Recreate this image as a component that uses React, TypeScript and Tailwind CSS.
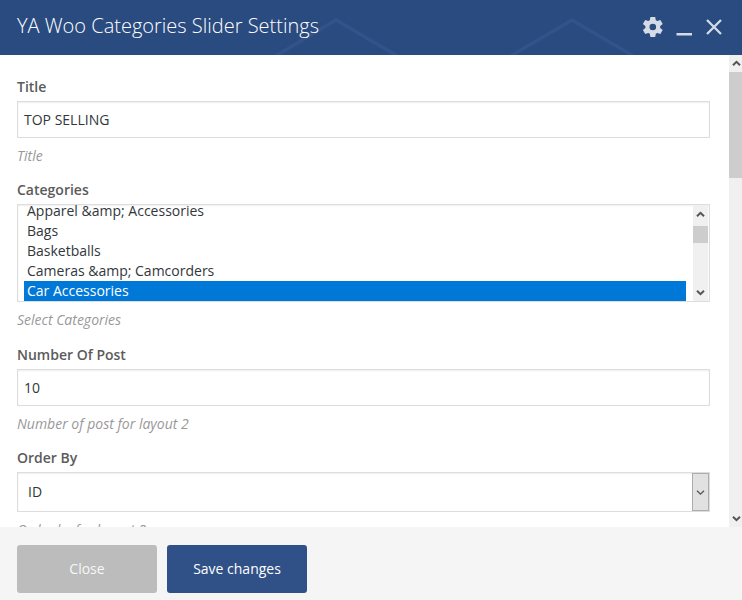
import React from "react";

const categories = [
  "Apparel &amp; Accessories",
  "Bags",
  "Basketballs",
  "Cameras &amp; Camcorders",
  "Car Accessories",
];

const inset = "border border-[#dddddd] bg-white shadow-[inset_0_1px_2px_rgba(0,0,0,0.07)]";

function Chevron({ down = false, thin = false }: { down?: boolean; thin?: boolean }) {
  return (
    <svg width="9" height="7" viewBox="0 0 9 7" fill="none" className={down ? "rotate-180" : ""}>
      <path d="M1 5.3 L4.5 1.8 L8 5.3" stroke="#555555" strokeWidth={thin ? 1.3 : 2} />
    </svg>
  );
}

function Field({
  label,
  hint,
  className = "mb-[14px]",
  children,
}: {
  label: string;
  hint: string;
  className?: string;
  children: React.ReactNode;
}) {
  return (
    <div className={className}>
      <div className="mb-1 h-5 font-semibold text-[#5b5b5b]">{label}</div>
      {children}
      <div className="mt-2 h-5 italic text-[#999999]">{hint}</div>
    </div>
  );
}

function Header() {
  return (
    <header className="relative flex h-[55px] shrink-0 items-center justify-between bg-[#2a4b80] pl-[17px]">
      <svg className="absolute inset-0" width="742" height="55" fill="none">
        <path
          d="M274 57 L336 20 L399 57 M509 57 L572 20 L635 57"
          stroke="#32538a"
          strokeWidth="3.5"
        />
      </svg>
      <h1 className="relative pb-[3px] text-[20px] font-light text-white">
        YA Woo Categories Slider Settings
      </h1>
      <svg className="relative" width="100" height="55" fill="none">
        <g fill="#d4dbe6">
          <path
            fillRule="evenodd"
            d="M8.4 17h4.8l.6 3.2 1.5.9 3.1-1.2 2.3 4-2.5 2.2v1.8l2.5 2.2-2.3 4-3.1-1.2-1.5.9-.6 3.2H8.4l-.6-3.2-1.5-.9-3.1 1.2-2.3-4 2.5-2.2v-1.8L.9 23.900l2.3-4 3.1 1.2 1.500-.9zM10.800 23.700a3.300 3.300 0 1 0 0 6.600 3.300 3.300 0 0 0 0-6.600z"
          />
          <rect x="34.500" y="33" width="15.500" height="2.500" />
        </g>
        <path d="M65 20 L79 34 M79 20 L65 34" stroke="#d4dbe6" strokeWidth="2.300" />
      </svg>
    </header>
  );
}

export default function App() {
  return (
    <div className="flex h-[600px] w-[742px] flex-col overflow-hidden bg-white font-['Open_Sans',sans-serif] text-[14px] leading-5 text-[#32373c]">
      <Header />
      <main className="flex h-[472px] shrink-0 overflow-hidden">
        <div className="w-[729px] pl-[17px] pr-[19px] pt-[22px]">
          <Field label="Title" hint="Title">
            <div className={`flex h-[37px] items-center px-[6px] ${inset}`}>TOP SELLING</div>
          </Field>
          <Field label="Categories" hint="Select Categories" className="mb-[15px]">
            <div className={`flex h-[98px] overflow-hidden ${inset}`}>
              <ul className="-mt-1 w-[668px] shrink-0 pl-[6px]">
                {categories.map((name, i) => (
                  <li
                    key={name}
                    className={
                      i === 4 ? "h-5 bg-[#0078d7] pl-[3px] text-white" : "h-5 pl-[3px]"
                    }
                  >
                    {name}
                  </li>
                ))}
              </ul>
              <div className="ml-[7px] flex w-[15px] flex-col items-center justify-between bg-[#f0f0f0] pb-[5px] pt-[6px]">
                <Chevron />
                <div className="mb-[38px] h-[17px] w-full bg-[#cdcdcd]" />
                <Chevron down />
              </div>
            </div>
          </Field>
          <Field label="Number Of Post" hint="Number of post for layout 2">
            <div className={`flex h-[37px] items-center px-[6px] ${inset}`}>10</div>
          </Field>
          <Field label="Order By" hint="Order by for layout 2">
            <div className={`flex h-10 items-stretch justify-between pl-[10px] ${inset}`}>
              <span className="self-center">ID</span>
              <div className="flex w-[17px] items-center justify-center border border-[#adadad] bg-[#e1e1e1]">
                <Chevron down thin />
              </div>
            </div>
          </Field>
        </div>
        <div className="flex h-full w-[13px] flex-col bg-[#f0f0f0]">
          <div className="flex h-[17px] shrink-0 items-center pl-[3px]">
            <Chevron />
          </div>
          <div className="h-[106px] bg-[#cdcdcd]" />
          <div className="mt-auto flex h-[17px] shrink-0 items-center pl-[3px]">
            <Chevron down />
          </div>
        </div>
      </main>
      <footer className="flex h-[73px] shrink-0 gap-[10px] bg-[#f5f5f5] pl-[17px] pt-[18px]">
        <button className="h-12 w-[140px] rounded-[3px] bg-[#bcbcbc] text-[#f7f7f7]">Close</button>
        <button className="h-12 w-[140px] rounded-[3px] bg-[#2f5187] text-white">
          Save changes
        </button>
      </footer>
    </div>
  );
}
